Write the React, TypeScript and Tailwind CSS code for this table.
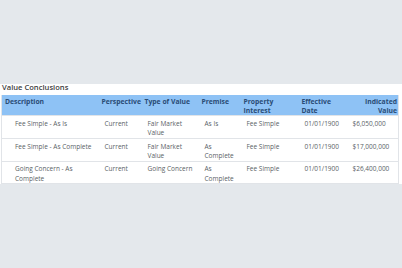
import React from "react";

const ROWS = [
  { desc: "Fee Simple - As Is", persp: "Current", type: "Fair Market Value", premise: "As Is", interest: "Fee Simple", date: "01/01/1900", value: "$6,050,000" },
  { desc: "Fee Simple - As Complete", persp: "Current", type: "Fair Market Value", premise: "As Complete", interest: "Fee Simple", date: "01/01/1900", value: "$17,000,000" },
  { desc: "Going Concern - As Complete", persp: "Current", type: "Going Concern", premise: "As Complete", interest: "Fee Simple", date: "01/01/1900", value: "$26,400,000" },
];

export default function App() {
  return (
    <div className="w-[402px] h-[268px] bg-[#e4e8ec] overflow-hidden font-['Open_Sans',sans-serif]">
      {/* page content scrolled under the top bar */}
      <div className="mt-[84px] bg-white pl-[1px] pr-[4px] overflow-hidden">
        <h2 className="-mt-[2px] pl-[1px] text-[7.6px] leading-[11px] font-semibold text-[#3d3d3d]">
          Value Conclusions
        </h2>
        <table className="table-fixed w-[397px] border-collapse border-x border-b border-[#e1e4e8] mt-[2px]">
          <colgroup>
            <col className="w-[97px]" />
            <col className="w-[43px]" />
            <col className="w-[57px]" />
            <col className="w-[42px]" />
            <col className="w-[58px]" />
            <col className="w-[48px]" />
            <col className="w-[52px]" />
          </colgroup>
          <thead>
            <tr className="bg-[#8ec2f5] text-[#2a4c75] text-[6.8px] leading-[9.4px] font-bold align-top">
              <th className="text-left font-bold pl-[3px] pt-[1.5px] pb-[0.5px]">Description</th>
              <th className="text-left font-bold pl-[3px] pt-[1.5px]">Perspective</th>
              <th className="text-left font-bold pl-[3px] pt-[1.5px]">Type of Value</th>
              <th className="text-left font-bold pl-[3px] pt-[1.5px]">Premise</th>
              <th className="text-left font-bold pl-[3px] pr-[6px] pt-[1.5px]">Property Interest</th>
              <th className="text-left font-bold pl-[3px] pr-[6px] pt-[1.5px]">Effective Date</th>
              <th className="text-right font-bold pr-[1px] pl-[6px] pt-[1.5px]">Indicated Value</th>
            </tr>
          </thead>
          <tbody className="text-[6.5px] leading-[9.6px] text-[#5a5f66]">
            {ROWS.map((r, i) => (
              <tr key={i} className="align-top border-t border-[#e1e4e8]">
                <td className="pl-[13px] pr-[5px] pt-[2.5px]">{r.desc}</td>
                <td className="pl-[6px] pt-[2.5px]">{r.persp}</td>
                <td className="pl-[6px] pr-[3px] pt-[2.5px]">{r.type}</td>
                <td className="pl-[6px] pr-[3px] pt-[2.5px]">{r.premise}</td>
                <td className="pl-[6px] pt-[2.5px]">{r.interest}</td>
                <td className="pl-[6px] pt-[2.5px]">{r.date}</td>
                <td className="pl-[6px] pt-[2.5px]">{r.value}</td>
              </tr>
            ))}
          </tbody>
        </table>
      </div>
    </div>
  );
}
